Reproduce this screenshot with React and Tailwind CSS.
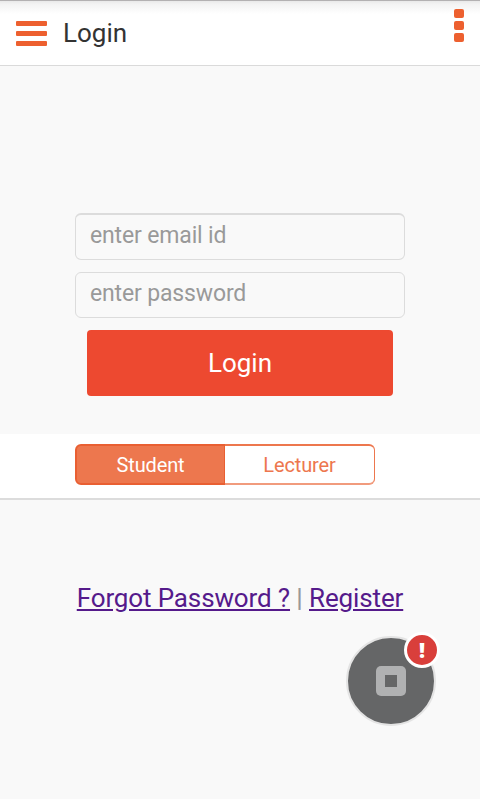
import { useState } from "react";

function Header() {
  return (
    <header className="flex h-[66px] items-start border-b border-[#dadada] bg-[linear-gradient(to_bottom,#b3b1b2_0px,#b3b1b2_1px,#e9e9e9_1px,#f3f3f3_4px,#ffffff_14px)] pr-4 pl-4">
      <button type="button" aria-label="Menu" className="mt-[21px] flex w-[31px] flex-col gap-[5px]">
        <span className="h-[5px] rounded-[1px] bg-[#ed602f]" />
        <span className="h-[5px] rounded-[1px] bg-[#ed602f]" />
        <span className="h-[5px] rounded-[1px] bg-[#ed602f]" />
      </button>
      <h1 className="mt-[17px] ml-4 text-[26px] leading-8 text-[#333333]">Login</h1>
      <button type="button" aria-label="More" className="mt-[9px] ml-auto flex w-[10px] flex-col gap-[3px]">
        <span className="h-[9px] rounded-[2px] bg-[#ed602f]" />
        <span className="h-[9px] rounded-[2px] bg-[#ed602f]" />
        <span className="h-[9px] rounded-[2px] bg-[#ed602f]" />
      </button>
    </header>
  );
}

const inputClass =
  "block w-full rounded-md border border-[#dcdcdc] bg-transparent px-[14px] text-[23px] tracking-[-0.15px] text-[#333333] outline-none placeholder:text-[#999999] placeholder:opacity-100";

function LoginForm() {
  return (
    <form className="mx-auto mt-[147px] w-[330px]" onSubmit={(e) => e.preventDefault()}>
      <input
        type="email"
        placeholder="enter email id"
        className={inputClass + " h-[47px] border-t-2 pb-[4px]"}
      />
      <input
        type="password"
        placeholder="enter password"
        className={inputClass + " mt-3 h-[46px] pb-[4px]"}
      />
      <button
        type="submit"
        className="mx-3 mt-3 block h-[66px] w-[306px] rounded-[4px] bg-[#ed4930] text-[26px] text-white"
      >
        Login
      </button>
    </form>
  );
}

function RoleTabs() {
  const [role, setRole] = useState("student");

  return (
    <div className="mt-[38px] h-[66px] border-b-2 border-[#dcdcdc] bg-white pt-[10px] pl-[75px]">
      <div className="flex h-[41px] w-[300px] text-[20px] tracking-[-0.12px]">
        <button
          type="button"
          onClick={() => setRole("student")}
          className={
            "w-[150px] rounded-l-md border-2 border-r pt-px " +
            (role === "student"
              ? "border-[#e95f32] bg-[#ed774e] text-white"
              : "border-[#ed774e] text-[#ed774e]")
          }
        >
          Student
        </button>
        <button
          type="button"
          onClick={() => setRole("lecturer")}
          className={
            "w-[150px] rounded-r-md border border-y-2 border-l-0 pt-px " +
            (role === "lecturer"
              ? "border-[#e95f32] bg-[#ed774e] text-white"
              : "border-[#ed774e] border-b-[#f19b7d] text-[#ed774e]")
          }
        >
          Lecturer
        </button>
      </div>
    </div>
  );
}

function AssistButton() {
  return (
    <button
      type="button"
      aria-label="Assist"
      className="absolute top-[636px] left-[346px] flex size-[90px] items-center justify-center rounded-full border-2 border-[#e4e4e4] bg-[#656667]"
    >
      <span className="flex size-[30px] items-center justify-center rounded-[5px] bg-[#b0b1b2]">
        <span className="size-[12px] bg-[#656667]" />
      </span>
      <span className="absolute -top-[6px] left-[56px] flex size-[36px] items-center justify-center rounded-full border-3 border-white bg-[#d93f3b] font-['Open_Sans'] text-[21px] leading-none font-extrabold text-white">
        !
      </span>
    </button>
  );
}

export default function App() {
  return (
    <div className="relative h-[799px] w-[480px] overflow-hidden bg-[#f9f9f9] font-['Roboto',sans-serif]">
      <Header />
      <LoginForm />
      <RoleTabs />
      <p className="mt-[81px] text-center text-[26px] leading-[34px] tracking-[-0.13px] whitespace-nowrap text-[#999999]">
        <a href="#forgot" className="text-[#551a8b] underline">Forgot Password ?</a>
        <span className="font-medium">{" | "}</span>
        <a href="#register" className="text-[#551a8b] underline">Register</a>
      </p>
      <AssistButton />
    </div>
  );
}
